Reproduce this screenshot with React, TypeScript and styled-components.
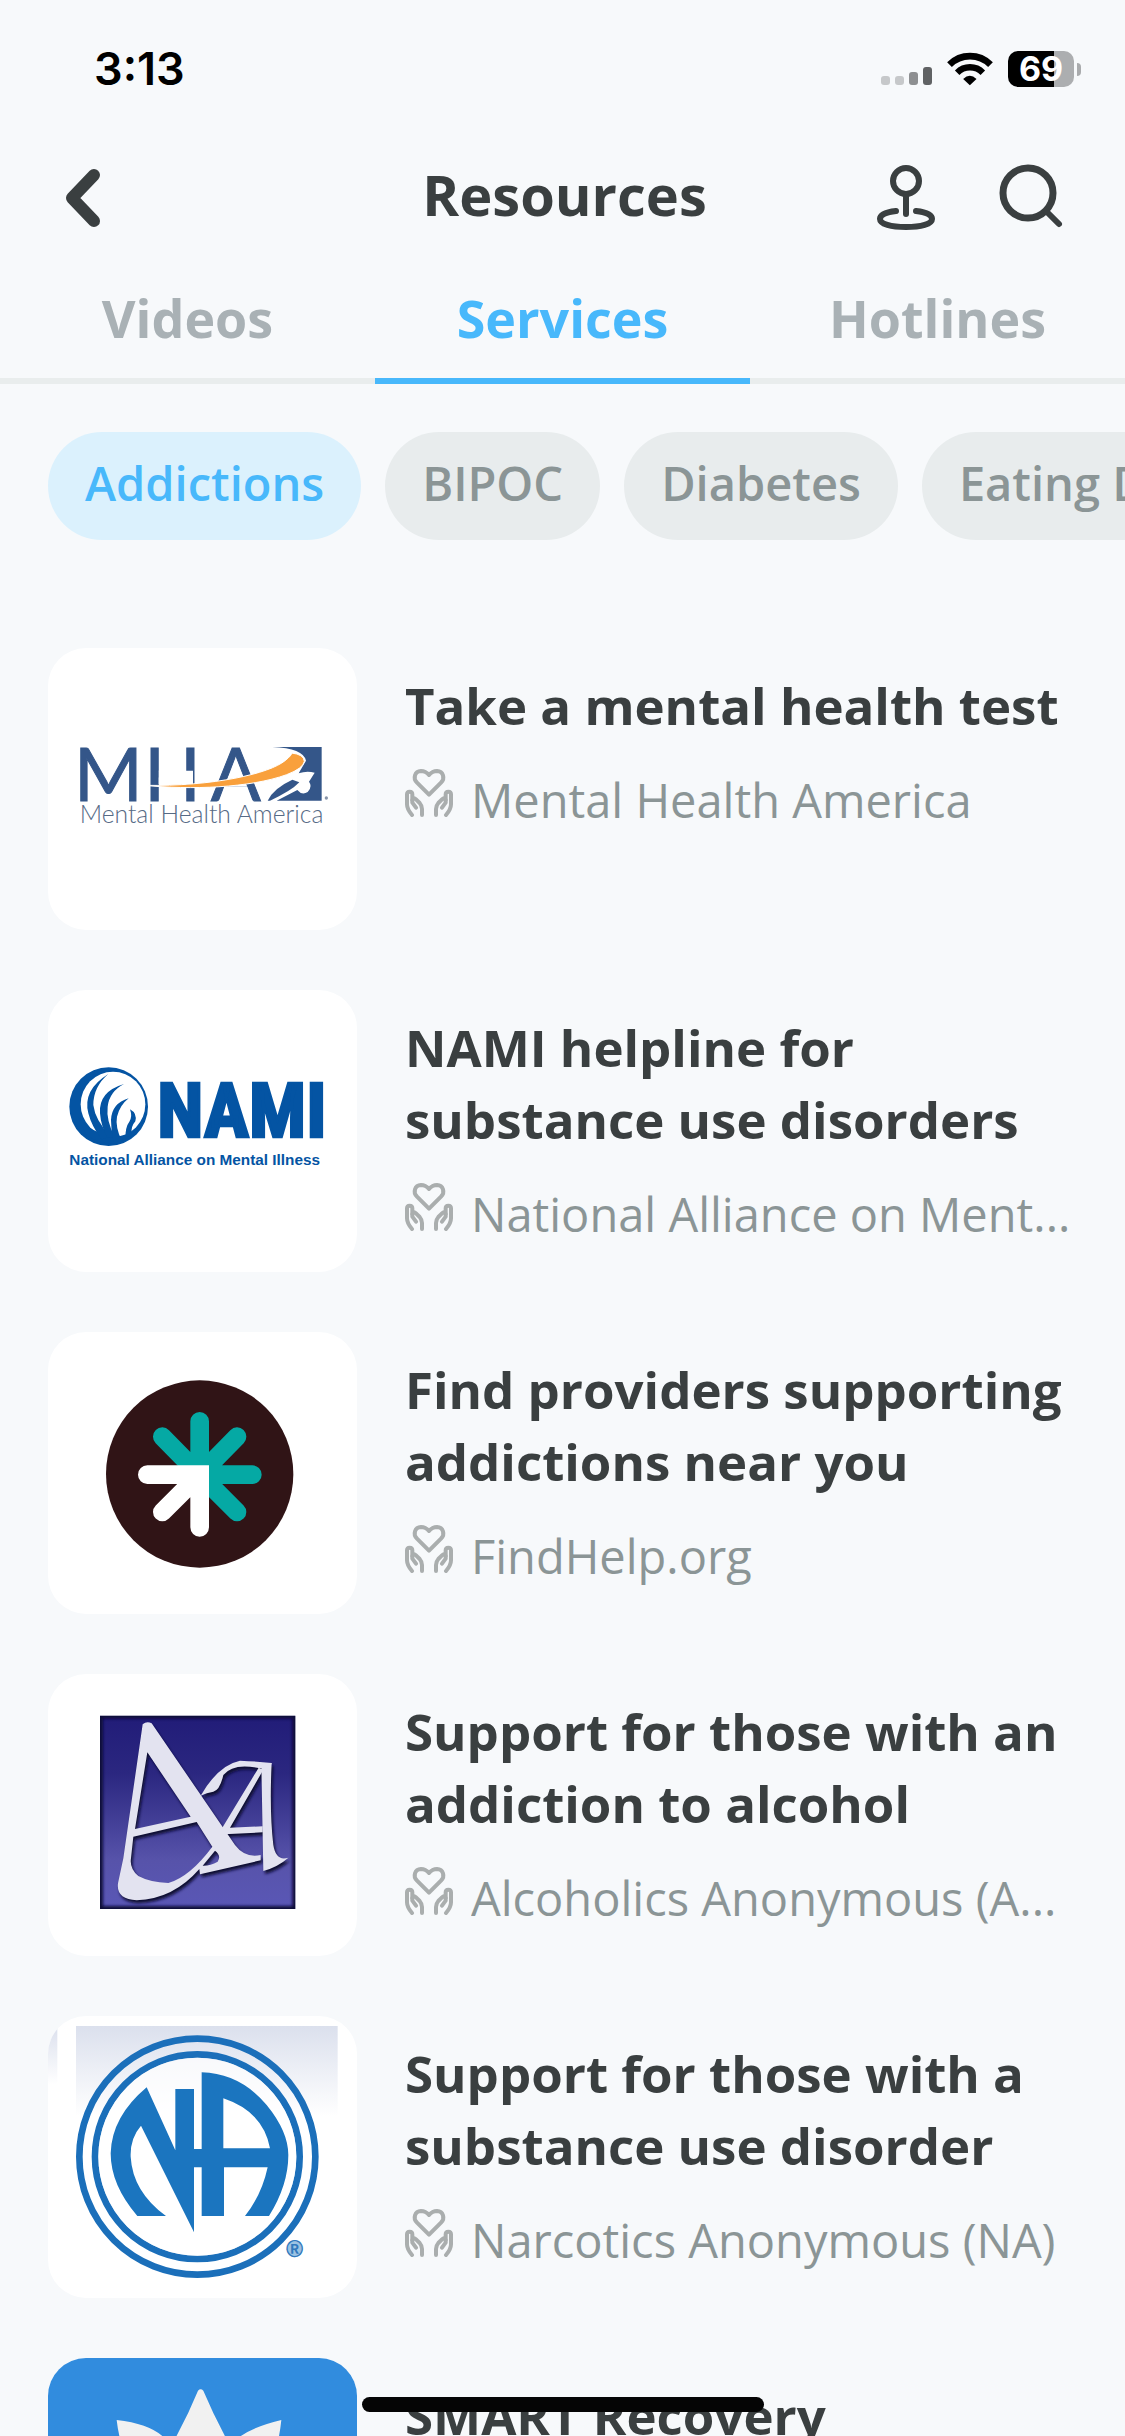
import React, { useState } from 'react';
import styled, { createGlobalStyle } from 'styled-components';

const color = {
  page: '#f7f9fb',
  ink: '#3a3f40',
  muted: '#8b9596',
  tab: '#a9b1b5',
  accent: '#48b8fb',
  accentSoft: '#dbf1fd',
  line: '#e9eded',
  chip: '#e8eced',
};

const GlobalStyle = createGlobalStyle`
  * { box-sizing: border-box; }
  body {
    margin: 0;
    background: ${color.page};
    color: ${color.ink};
    font-family: "Open Sans", "Noto Sans", sans-serif;
  }
  button { font: inherit; border: 0; margin: 0; padding: 0; background: none; cursor: pointer; }
  svg { display: block; }
`;

const Screen = styled.div`
  position: relative;
  display: flex;
  flex-direction: column;
  height: 100vh;
  overflow: hidden;
`;

const StatusBar = styled.div`
  display: flex;
  flex: none;
  align-items: center;
  justify-content: space-between;
  height: 138px;
  padding: 0 44px 0 94px;
`;

const Time = styled.time`
  color: #000;
  font: 600 45px/54px Inter, sans-serif;
`;

const StatusIcons = styled.div`
  display: flex;
  align-items: center;
  gap: 15px;
`;

const Battery = styled.div`
  display: flex;
  align-items: center;
  gap: 3px;

  &::after {
    content: '';
    width: 4px;
    height: 13px;
    border-radius: 0 6px 6px 0;
    background: #a9abad;
  }
`;

const BatteryLevel = styled.div<{ $level: number }>`
  width: 66px;
  border-radius: 10px;
  background: linear-gradient(90deg, #000 ${(p) => p.$level}%, #acaeb0 ${(p) => p.$level}%);
  color: #fff;
  text-align: center;
  font: 700 34px/36px Inter, sans-serif;
`;

const Header = styled.header`
  display: grid;
  flex: none;
  grid-template-columns: 1fr auto 1fr;
  align-items: center;
  height: 120px;
  padding: 0 60px 0 64px;
`;

const PageTitle = styled.h1`
  margin: 0;
  padding-bottom: 8px;
  font-size: 56px;
  line-height: 72px;
  font-weight: 700;
`;

const Actions = styled.div`
  display: flex;
  justify-content: flex-end;
  gap: 63px;
`;

const IconButton = styled.button`
  color: ${color.ink};
  justify-self: start;
`;

const Tabs = styled.div`
  display: grid;
  flex: none;
  grid-template-columns: repeat(3, 1fr);
`;

const Tab = styled.button<{ $active: boolean }>`
  height: 126px;
  border-bottom: 6px solid ${(p) => (p.$active ? color.accent : color.line)};
  color: ${(p) => (p.$active ? color.accent : color.tab)};
  font-size: 52px;
  line-height: 72px;
  font-weight: 700;
`;

const Chips = styled.div`
  display: flex;
  flex: none;
  gap: 24px;
  padding: 48px 0 48px 48px;
  overflow: hidden;
`;

const Chip = styled.button<{ $active: boolean }>`
  flex: none;
  height: 108px;
  padding: 0 37px 6px;
  border-radius: 54px;
  background: ${(p) => (p.$active ? color.accentSoft : color.chip)};
  color: ${(p) => (p.$active ? color.accent : color.muted)};
  font-size: 47px;
  line-height: 60px;
  font-weight: 600;
  white-space: nowrap;
`;

const List = styled.ul`
  display: flex;
  flex: 1;
  flex-direction: column;
  gap: 60px;
  min-height: 0;
  margin: 0;
  padding: 60px 48px 0;
  list-style: none;
`;

const Row = styled.a`
  display: flex;
  gap: 48px;
  color: inherit;
  text-decoration: none;
`;

const Thumb = styled.div`
  flex: none;
  width: 309px;
  height: 282px;
  border-radius: 38px;
  background: #fff;
  overflow: hidden;
`;

const Details = styled.div`
  flex: 1;
  min-width: 0;
  padding-top: 21px;
`;

const RowTitle = styled.h2`
  margin: 0 0 28px;
  font-size: 51px;
  line-height: 72px;
  font-weight: 700;
`;

const Provider = styled.div`
  display: flex;
  align-items: flex-start;
  gap: 18px;
  color: ${color.muted};

  svg { flex: none; }
`;

const ProviderName = styled.span`
  overflow: hidden;
  font-size: 47px;
  line-height: 62px;
  white-space: nowrap;
  text-overflow: ellipsis;
`;

const HomeIndicator = styled.div`
  position: absolute;
  bottom: 24px;
  left: 50%;
  width: 402px;
  height: 15px;
  border-radius: 8px;
  background: #050505;
  transform: translateX(-50%);
`;

const SignalIcon = () => (
  <svg width="51" height="36" viewBox="0 0 51 36" aria-hidden="true">
    <rect x="0" y="25" width="9" height="9" rx="3" fill="#c6c8ca" />
    <rect x="14" y="25" width="9" height="9" rx="3" fill="#c6c8ca" />
    <rect x="28" y="21" width="9" height="13" rx="3" fill="#8d8f91" />
    <rect x="42" y="16" width="9" height="18" rx="3" fill="#606264" />
  </svg>
);

const WifiIcon = () => (
  <svg width="46" height="36" viewBox="295 62 137 108" fill="none" stroke="#000" aria-hidden="true">
    <path d="M302 103A87 87 0 0 1 425 103" strokeWidth="20" />
    <path d="M325 127A54 54 0 0 1 402 127" strokeWidth="19" />
    <path d="M363 165L343 146Q363 127 383 146Z" fill="#000" stroke="none" />
  </svg>
);

const BackIcon = () => (
  <svg width="36" height="60" viewBox="0 0 36 60" fill="none" stroke="currentColor" strokeWidth="12" strokeLinecap="round" strokeLinejoin="round" aria-hidden="true">
    <path d="M30 7L8 30L30 53" />
  </svg>
);

const PinIcon = () => (
  <svg width="60" height="68" viewBox="0 0 60 68" fill="none" stroke="currentColor" strokeWidth="6" strokeLinecap="round" aria-hidden="true">
    <circle cx="30" cy="17" r="13" />
    <path d="M30 31V50" />
    <path d="M20 47C10 48 4 51 4 55C4 60 15 63 30 63S56 60 56 55C56 51 50 48 40 47" />
  </svg>
);

const SearchIcon = () => (
  <svg width="66" height="68" viewBox="0 0 66 68" fill="none" stroke="currentColor" strokeLinecap="round" aria-hidden="true">
    <circle cx="29" cy="29" r="25" strokeWidth="7" />
    <path d="M47 47L60 60" strokeWidth="6" />
  </svg>
);

const Hand = () => (
  <>
    <path d="M66 222Q51 205 51 190V160Q51 152 59 152Q67 152 67 160V185L78 200" />
    <path d="M67 177Q71 168 78 175L89 186Q96 194 96 204V222" />
  </>
);

const CareIcon = () => (
  <svg width="48" height="48" viewBox="45 84 144 144" fill="none" stroke="#aaaeae" strokeWidth="12" strokeLinecap="round" strokeLinejoin="round" aria-hidden="true">
    <path d="M117 161L81 125C68 112 74 91 93 90C104 90 112 96 117 102C122 96 130 90 141 90C160 91 166 112 153 125Z" />
    <Hand />
    <g transform="translate(234 0) scale(-1 1)"><Hand /></g>
  </svg>
);

const MhaLogo = () => (
  <svg width="309" height="282" viewBox="24 24 927 846" aria-hidden="true">
    <g fill="#345689" stroke="#345689" strokeWidth="3" fontFamily="Lato, sans-serif" fontSize="222">
      <text x="102" y="482">M</text>
      <text x="313" y="482">H</text>
      <text x="512" y="482">A</text>
    </g>
    <path d="M356 392H459V432H356ZM572 396H603L622 440H552Z" fill="#fff" />
    <path d="M697 321H845V482H710L772 450Q786 467 803 456Q818 440 807 425L824 398Q800 391 776 400L798 362Q790 325 697 321Z" fill="#345689" />
    <path d="M683 482Q700 445 757 419L778 427Q755 452 690 482Z" fill="#345689" />
    <path d="M313 436C520 440 690 400 735 362Q758 344 754 339Q792 343 793 364Q790 385 740 404C630 444 450 450 313 436Z" fill="#f9a03c" stroke="#fff" strokeWidth="3" />
    <text x="119" y="548" fill="#566a85" fontFamily="Lato, sans-serif" fontWeight="300" fontSize="74">Mental Health America</text>
    <circle cx="859" cy="474" r="5" fill="#8794a8" />
  </svg>
);

const NamiLogo = () => (
  <svg width="309" height="282" viewBox="24 30 927 846" fill="#0454a3" aria-hidden="true">
    <circle cx="206" cy="380" r="118" />
    <ellipse cx="219" cy="373" rx="97" ry="98" fill="#fff" />
    <path d="M112 410Q160 468 245 470L250 488Q190 500 140 465Z" />
    <path d="M205 282Q127 330 145 400Q155 440 185 478L212 470Q165 420 160 375Q160 320 205 282Z" />
    <path d="M252 312Q175 335 180 400Q183 440 203 474L224 470Q198 420 203 380Q208 335 252 312Z" />
    <path d="M266 355Q215 370 213 420Q213 450 220 484L246 484Q225 440 231 410Q240 375 266 355Z" />
    <path d="M270 388Q292 400 286 424Q272 440 275 462L256 476Q256 440 268 425Q278 410 270 388Z" />
    <text x="352" y="471" fontFamily="Liberation Sans Narrow, Roboto Condensed, DejaVu Sans Condensed, sans-serif" fontWeight="700" fontSize="226" stroke="#0454a3" strokeWidth="8">NAMI</text>
    <text x="88" y="554" fontFamily="Liberation Sans, sans-serif" fontWeight="700" fontSize="46">National Alliance on Mental Illness</text>
  </svg>
);

const FindHelpLogo = () => (
  <svg width="309" height="282" viewBox="24 36 927 846" aria-hidden="true">
    <circle cx="479" cy="462" r="281" fill="#301416" />
    <g fill="none" strokeWidth="56" strokeLinecap="round">
      <path d="M479 464V304M479 464H637M479 464L367 350M479 464L591 350M479 464L591 576" stroke="#05a9a4" />
      <path d="M322 464H479V622M367 576L468 475" stroke="#fff" />
    </g>
  </svg>
);

const AaShape = () => (
  <>
    <path
      fillRule="evenodd"
      d="M308 178Q320 168 335 175L585 540Q615 580 662 570L662 586L480 628L478 612Q400 702 290 706Q228 702 234 655L250 580ZM322 262L452 455L285 492ZM280 515L470 471L517 545Q450 635 385 654Q330 652 295 633Q268 610 273 580ZM525 557Q545 572 533 590Q510 603 488 602Z"
    />
    <path d="M482 392Q535 300 600 287Q650 289 695 294L690 308L660 310Q580 292 550 330Q540 375 520 380Q500 383 482 392Z" />
    <path d="M664 298L695 294Q688 440 700 540Q708 590 745 578Q715 605 670 618Z" />
    <path d="M656 308L670 314L570 488L668 484V502L552 508L546 490Z" />
  </>
);

const AaLogo = () => (
  <svg width="309" height="282" viewBox="24 27 927 846" aria-hidden="true">
    <defs>
      <linearGradient id="aa-sky" x1="0" y1="0" x2="0" y2="1">
        <stop offset="0" stopColor="#211c78" />
        <stop offset="0.3" stopColor="#2b2780" />
        <stop offset="0.75" stopColor="#5753aa" />
        <stop offset="1" stopColor="#5a57b6" />
      </linearGradient>
      <filter id="aa-soft"><feGaussianBlur stdDeviation="5" /></filter>
      <clipPath id="aa-box"><rect x="180" y="152" width="586" height="580" /></clipPath>
    </defs>
    <g clipPath="url(#aa-box)">
      <rect x="180" y="152" width="586" height="580" fill="url(#aa-sky)" />
      <rect x="180" y="152" width="586" height="580" fill="none" stroke="#0c0a38" strokeWidth="18" filter="url(#aa-soft)" />
      <g fill="#0e0c33" transform="translate(5 9)" filter="url(#aa-soft)"><AaShape /></g>
      <g fill="#e3e3f0"><AaShape /></g>
    </g>
  </svg>
);

const NaLogo = () => (
  <svg width="309" height="282" viewBox="24 33 927 846" aria-hidden="true">
    <defs>
      <linearGradient id="na-haze" x1="0" y1="0" x2="0" y2="1">
        <stop offset="0" stopColor="#dbe0ed" />
        <stop offset="0.35" stopColor="#fff" />
      </linearGradient>
    </defs>
    <rect x="24" y="63" width="28" height="500" fill="url(#na-haze)" />
    <rect x="108" y="63" width="785" height="776" fill="url(#na-haze)" />
    <g fill="none" stroke="#1b6fba" strokeWidth="20">
      <circle cx="472" cy="455" r="354" />
      <circle cx="472" cy="455" r="307" />
    </g>
    <circle cx="472" cy="455" r="297" fill="#fff" fillOpacity="0.7" />
    <path
      fill="#1b75bf"
      fillRule="evenodd"
      d="M320 247L406 436V252H462V432H485V202Q600 205 680 300Q745 380 745 450Q745 540 687 633H615Q665 570 683 487H552V633H485V487H462V682L303 362Q270 400 272 455Q278 560 378 633H292Q212 540 212 445Q215 335 320 247ZM550 280Q670 320 690 430H550Z"
    />
    <circle cx="764" cy="733" r="24" fill="#9cc3e3" />
    <text x="738" y="757" fill="#3179bd" fontFamily="Liberation Sans, sans-serif" fontWeight="700" fontSize="70">®</text>
  </svg>
);

const SmartLogo = () => (
  <svg width="309" height="282" viewBox="24 54 927 846" aria-hidden="true">
    <rect x="24" y="54" width="927" height="846" fill="#318cde" />
    <path
      fill="#f1f1f1"
      d="M474 152Q482 144 490 152Q525 235 572 320Q600 270 724 240Q715 330 680 400L850 420Q740 560 482 780Q224 560 114 420L284 400Q240 330 230 240Q360 255 392 320Q440 235 474 152Z"
    />
  </svg>
);

const TABS = ['Videos', 'Services', 'Hotlines'];
const TOPICS = ['Addictions', 'BIPOC', 'Diabetes', 'Eating Disorders'];
const SERVICES = [
  { title: 'Take a mental health test', provider: 'Mental Health America', Logo: MhaLogo },
  { title: 'NAMI helpline for substance use disorders', provider: 'National Alliance on Ment...', Logo: NamiLogo },
  { title: 'Find providers supporting addictions near you', provider: 'FindHelp.org', Logo: FindHelpLogo },
  { title: 'Support for those with an addiction to alcohol', provider: 'Alcoholics Anonymous (A...', Logo: AaLogo },
  { title: 'Support for those with a substance use disorder', provider: 'Narcotics Anonymous (NA)', Logo: NaLogo },
  { title: 'SMART Recovery', provider: '', Logo: SmartLogo },
];

export default function App() {
  const [tab, setTab] = useState('Services');
  const [topic, setTopic] = useState('Addictions');

  return (
    <Screen>
      <GlobalStyle />
      <StatusBar>
        <Time>3:13</Time>
        <StatusIcons>
          <SignalIcon />
          <WifiIcon />
          <Battery>
            <BatteryLevel $level={69}>69</BatteryLevel>
          </Battery>
        </StatusIcons>
      </StatusBar>
      <Header>
        <IconButton type="button" aria-label="Back"><BackIcon /></IconButton>
        <PageTitle>Resources</PageTitle>
        <Actions>
          <IconButton type="button" aria-label="Nearby"><PinIcon /></IconButton>
          <IconButton type="button" aria-label="Search"><SearchIcon /></IconButton>
        </Actions>
      </Header>
      <Tabs role="tablist">
        {TABS.map((name) => (
          <Tab key={name} type="button" role="tab" aria-selected={name === tab} $active={name === tab} onClick={() => setTab(name)}>
            {name}
          </Tab>
        ))}
      </Tabs>
      <Chips>
        {TOPICS.map((name) => (
          <Chip key={name} type="button" aria-pressed={name === topic} $active={name === topic} onClick={() => setTopic(name)}>
            {name}
          </Chip>
        ))}
      </Chips>
      <List>
        {SERVICES.map(({ title, provider, Logo }) => (
          <li key={title}>
            <Row href="#">
              <Thumb><Logo /></Thumb>
              <Details>
                <RowTitle>{title}</RowTitle>
                {provider && (
                  <Provider>
                    <CareIcon />
                    <ProviderName>{provider}</ProviderName>
                  </Provider>
                )}
              </Details>
            </Row>
          </li>
        ))}
      </List>
      <HomeIndicator />
    </Screen>
  );
}
